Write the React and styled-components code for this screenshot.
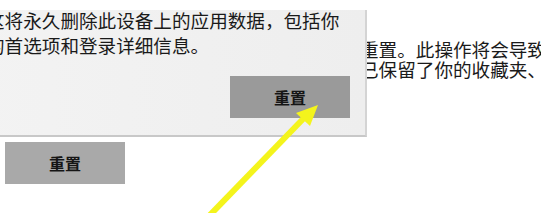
import React from "react";
import styled, { createGlobalStyle } from "styled-components";

const GlobalStyle = createGlobalStyle`
  *, *::before, *::after {
    box-sizing: border-box;
  }
  html, body {
    margin: 0;
    padding: 0;
    background: #ffffff;
  }
  body {
    font-family: "Noto Sans CJK SC", "Noto Sans", sans-serif;
    color: #1b1b1b;
  }
`;

const Page = styled.div`
  position: relative;
  width: 541px;
  height: 213px;
  overflow: hidden;
  background: #ffffff;
`;

const Content = styled.div`
  display: flex;
  flex-direction: column;
  align-items: flex-start;
  padding-top: 39px;
`;

const Paragraph = styled.div`
  margin-left: 360px;
  width: 181px;
  overflow: hidden;
  font-size: 18.6px;
  line-height: 20px;
  white-space: nowrap;
  color: #1a1a1a;
`;

const Button = styled.button`
  width: 120px;
  height: 42px;
  border: none;
  padding: 0;
  background: ${(p) => (p.$light ? "#a9a9a9" : "#9a9a9a")};
  font-family: "Noto Sans CJK SC", sans-serif;
  font-size: 16px;
  font-weight: 700;
  color: #151515;
  cursor: pointer;
`;

const PageButton = styled(Button)`
  margin-top: 63px;
  margin-left: 5px;
`;

const Flyout = styled.div`
  position: absolute;
  left: -31px;
  top: 10px;
  width: 398px;
  display: flex;
  flex-direction: column;
  padding: 0 15px 17px 17px;
  background: linear-gradient(90deg, #f3f3f3 0%, #eeeeee 100%);
  border-right: 2px solid #d4d4d4;
  border-bottom: 2px solid #c8c8c8;
`;

const FlyoutText = styled.p`
  margin: -3px 0 0;
  font-size: 18.6px;
  line-height: 25px;
  color: #1a1a1a;
`;

const FlyoutButton = styled(Button)`
  align-self: flex-end;
  margin-top: 19px;
`;

const Arrow = styled.svg`
  position: absolute;
  left: 0;
  top: 0;
  pointer-events: none;
`;

export default function App() {
  return (
    <Page>
      <GlobalStyle />
      <Content>
        <Paragraph>
          <div>重置。此操作将会导致此设备</div>
          <div>已保留了你的收藏夹、阅读列表</div>
        </Paragraph>
        <PageButton $light>重置</PageButton>
      </Content>
      <Flyout>
        <FlyoutText>
          这将永久删除此设备上的应用数据，包括你的首选项和登录详细信息。
        </FlyoutText>
        <FlyoutButton>重置</FlyoutButton>
      </Flyout>
      <Arrow width="541" height="213" viewBox="0 0 541 213">
        <line x1="209" y1="216" x2="304" y2="118" stroke="#f4f41c" strokeWidth="6" />
        <polygon points="318,105 310,126 296,113" fill="#f4f41c" />
      </Arrow>
    </Page>
  );
}
